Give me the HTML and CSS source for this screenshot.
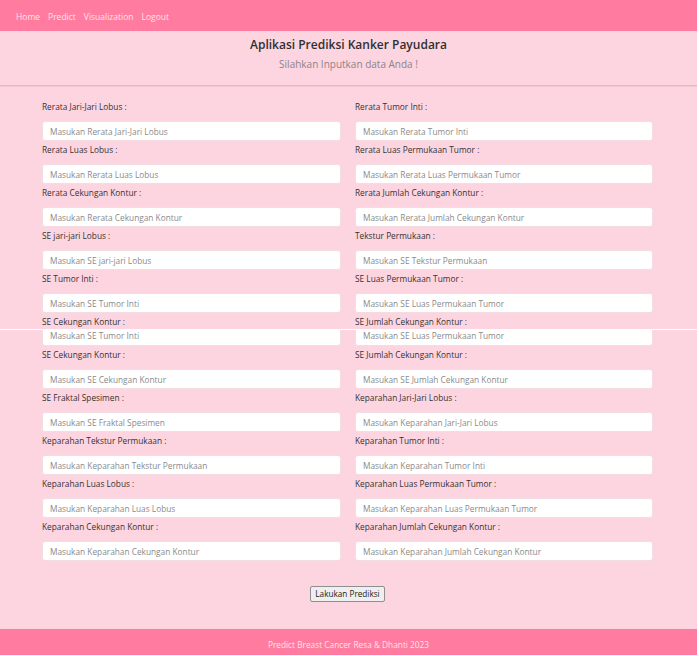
FILE: index.html
```html
<!DOCTYPE html>
<html lang="id">
<head>
<meta charset="utf-8">
<title>Aplikasi Prediksi Kanker Payudara</title>
<link rel="stylesheet" href="styles.css">
</head>
<body>
<nav class="navbar">
  <a href="#">Home</a>
  <a href="#">Predict</a>
  <a href="#">Visualization</a>
  <a href="#">Logout</a>
</nav>
<header class="page-header">
  <h1>Aplikasi Prediksi Kanker Payudara</h1>
  <p>Silahkan Inputkan data Anda !</p>
</header>

<section class="form-part part-top">
  <div class="field"><label>Rerata Jari-Jari Lobus :</label><input type="text" placeholder="Masukan Rerata Jari-Jari Lobus"></div>
  <div class="field"><label>Rerata Tumor Inti :</label><input type="text" placeholder="Masukan Rerata Tumor Inti"></div>
  <div class="field"><label>Rerata Luas Lobus :</label><input type="text" placeholder="Masukan Rerata Luas Lobus"></div>
  <div class="field"><label>Rerata Luas Permukaan Tumor :</label><input type="text" placeholder="Masukan Rerata Luas Permukaan Tumor"></div>
  <div class="field"><label>Rerata Cekungan Kontur :</label><input type="text" placeholder="Masukan Rerata Cekungan Kontur"></div>
  <div class="field"><label>Rerata Jumlah Cekungan Kontur :</label><input type="text" placeholder="Masukan Rerata Jumlah Cekungan Kontur"></div>
  <div class="field"><label>SE jari-jari Lobus :</label><input type="text" placeholder="Masukan SE jari-jari Lobus"></div>
  <div class="field"><label>Tekstur Permukaan :</label><input type="text" placeholder="Masukan SE Tekstur Permukaan"></div>
  <div class="field"><label>SE Tumor Inti :</label><input type="text" placeholder="Masukan SE Tumor Inti"></div>
  <div class="field"><label>SE Luas Permukaan Tumor :</label><input type="text" placeholder="Masukan SE Luas Permukaan Tumor"></div>
  <div class="field label-only"><label>SE Cekungan Kontur :</label></div>
  <div class="field label-only"><label>SE Jumlah Cekungan Kontur :</label></div>
</section>

<div class="seam"></div>

<section class="form-part part-bottom">
  <div class="field"><input class="cut" type="text" placeholder="Masukan SE Tumor Inti"></div>
  <div class="field"><input class="cut" type="text" placeholder="Masukan SE Luas Permukaan Tumor"></div>
  <div class="field"><label>SE Cekungan Kontur :</label><input type="text" placeholder="Masukan SE Cekungan Kontur"></div>
  <div class="field"><label>SE Jumlah Cekungan Kontur :</label><input type="text" placeholder="Masukan SE Jumlah Cekungan Kontur"></div>
  <div class="field"><label>SE Fraktal Spesimen :</label><input type="text" placeholder="Masukan SE Fraktal Spesimen"></div>
  <div class="field"><label>Keparahan Jari-Jari Lobus :</label><input type="text" placeholder="Masukan Keparahan Jari-Jari Lobus"></div>
  <div class="field"><label>Keparahan Tekstur Permukaan :</label><input type="text" placeholder="Masukan Keparahan Tekstur Permukaan"></div>
  <div class="field"><label>Keparahan Tumor Inti :</label><input type="text" placeholder="Masukan Keparahan Tumor Inti"></div>
  <div class="field"><label>Keparahan Luas Lobus :</label><input type="text" placeholder="Masukan Keparahan Luas Lobus"></div>
  <div class="field"><label>Keparahan Luas Permukaan Tumor :</label><input type="text" placeholder="Masukan Keparahan Luas Permukaan Tumor"></div>
  <div class="field"><label>Keparahan Cekungan Kontur :</label><input type="text" placeholder="Masukan Keparahan Cekungan Kontur"></div>
  <div class="field"><label>Keparahan Jumlah Cekungan Kontur :</label><input type="text" placeholder="Masukan Keparahan Jumlah Cekungan Kontur"></div>
</section>

<div class="actions">
  <button type="submit">Lakukan Prediksi</button>
</div>

<footer class="site-footer">Predict Breast Cancer Resa &amp; Dhanti 2023</footer>
</body>
</html>
```

FILE: styles.css
```css
html {
  background: #ffffff;
}

body {
  margin: 0 2px 0 0;
  background: #fdd5e0;
  font-family: "Open Sans", "Noto Sans", sans-serif;
  color: #333333;
}

.navbar {
  display: flex;
  gap: 8px;
  height: 31px;
  box-sizing: border-box;
  padding: 2px 0 0 16px;
  background: #ff7b9f;
}

.navbar a {
  color: #ffe3eb;
  text-decoration: none;
  font-size: 8.5px;
  line-height: 29px;
}

.page-header {
  text-align: center;
  padding: 6px 0 14px;
  border-bottom: 1px solid #e6b8c5;
  box-shadow: 0 1px 0 #f2c8d3;
  margin-bottom: 1px;
}

.page-header h1 {
  margin: 0;
  font-size: 12px;
  line-height: 16px;
  font-weight: 600;
  color: #303030;
}

.page-header p {
  margin: 4px 0 0;
  font-size: 10px;
  font-weight: 400;
  line-height: 14px;
  color: #8e8288;
}

.form-part {
  display: grid;
  grid-template-columns: 299px 298px;
  column-gap: 14px;
  padding: 0 44px 0 42px;
}

.part-top {
  padding-top: 11px;
}

.field label {
  display: block;
  font-size: 8.3px;
  line-height: 14px;
  padding-top: 2px;
  margin-bottom: 7px;
  color: #333333;
}

.field.label-only label {
  margin-bottom: 0;
}

.field input {
  display: block;
  width: 100%;
  height: 20px;
  box-sizing: border-box;
  margin: 0;
  padding: 0 7px;
  border: 1px solid #f3dde3;
  border-radius: 3px;
  background: #ffffff;
  font-family: "Open Sans", "Noto Sans", sans-serif;
  font-size: 8.3px;
  color: #333333;
  outline: none;
}

.field input::placeholder {
  color: #8a8a8a;
}

.field input.cut {
  height: 16px;
  padding-bottom: 4px;
  border-top: none;
  border-radius: 0 0 3px 3px;
}

.seam {
  height: 1px;
  background: #ffffff;
}

.actions {
  display: flex;
  justify-content: center;
  padding: 25px 44px 27px 42px;
}

.actions button {
  height: 16px;
  box-sizing: border-box;
  padding: 0 4px;
  border: 1px solid #8f8f8f;
  border-radius: 2px;
  background: #efefef;
  font-family: "Open Sans", "Noto Sans", sans-serif;
  font-size: 8.2px;
  line-height: 14px;
  color: #222222;
}

.site-footer {
  height: 26px;
  box-sizing: border-box;
  padding: 10px 0 0;
  background: #ff7b9f;
  color: #ffe3eb;
  text-align: center;
  font-size: 8.3px;
  line-height: 12px;
}
```
